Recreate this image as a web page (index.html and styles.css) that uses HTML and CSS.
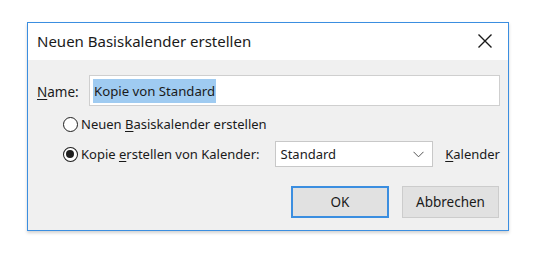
FILE: index.html
```html
<!DOCTYPE html>
<html lang="de">
<head>
<meta charset="utf-8">
<link rel="stylesheet" href="styles.css">
</head>
<body>
<div class="dialog">
  <div class="titlebar">
    <span class="title">Neuen Basiskalender erstellen</span>
    <svg class="close" width="16" height="16" viewBox="0 0 16 16"><path d="M1.5 1.5 L14.5 14.5 M14.5 1.5 L1.5 14.5" stroke="#1a1a1a" stroke-width="1.4" fill="none"/></svg>
  </div>
  <div class="body">
    <div class="name-row">
      <span class="label"><u>N</u>ame:</span>
      <div class="input"><span class="sel">Kopie von Standard</span></div>
    </div>
    <div class="radio-row">
      <span class="radio"></span>
      <span>Neuen <u>B</u>asiskalender erstellen</span>
    </div>
    <div class="radio-row copy-row">
      <span class="radio checked"></span>
      <span class="copy-label">Kopie <u>e</u>rstellen von Kalender:</span>
      <div class="select">
        <span>Standard</span>
        <svg class="chev" width="11" height="7" viewBox="0 0 11 7"><path d="M0.5 0.8 L5.5 5.8 L10.5 0.8" stroke="#555" stroke-width="1" fill="none"/></svg>
      </div>
      <span class="kal"><u>K</u>alender</span>
    </div>
    <div class="buttons">
      <div class="btn ok">OK</div>
      <div class="btn">Abbrechen</div>
    </div>
  </div>
</div>
</body>
</html>
```
FILE: styles.css
```css
html, body {
  margin: 0;
  padding: 0;
  background: #ffffff;
}
body {
  width: 538px;
  height: 259px;
  overflow: hidden;
  font-family: "Noto Sans", "Open Sans", sans-serif;
  color: #1a1a1a;
}
u {
  text-decoration-thickness: 1px;
  text-underline-offset: 2px;
}
.dialog {
  margin: 22px 0 0 27px;
  width: 480px;
  height: 207px;
  border: 1px solid #3b8ee0;
  display: flex;
  flex-direction: column;
  box-shadow: 0 2px 3px rgba(0,0,0,0.18);
}
.titlebar {
  height: 37px;
  background: #ffffff;
  display: flex;
  align-items: center;
  justify-content: space-between;
  padding: 0 15px 0 9px;
}
.title {
  font-size: 15px;
  margin-top: -2px;
}
.close {
  margin-top: -2px;
}
.body {
  flex: 1;
  background: #f0f0f0;
  padding: 15px 8px 0 8px;
  font-size: 13px;
}
.name-row {
  display: flex;
  align-items: center;
  height: 31px;
}
.label {
  width: 52px;
  padding-left: 1px;
  margin-top: 2px;
  font-size: 13.5px;
}
.input {
  flex: 1;
  height: 29px;
  border: 1px solid #cfcfcf;
  background: #ffffff;
  display: flex;
  align-items: center;
  padding-left: 3px;
}
.sel {
  background: #9fcbf1;
  padding: 3px 1px 3px 1px;
  font-size: 13.2px;
}
.radio-row {
  display: flex;
  align-items: center;
  padding-left: 27px;
  margin-top: 7px;
  height: 22px;
}
.copy-row {
  margin-top: 6px;
  height: 26px;
}
.radio {
  width: 13px;
  height: 13px;
  border: 1.5px solid #1f1f1f;
  border-radius: 50%;
  background: #ffffff;
  margin-right: 3px;
  box-sizing: content-box;
  display: flex;
  align-items: center;
  justify-content: center;
}
.radio.checked::after {
  content: "";
  width: 8px;
  height: 8px;
  border-radius: 50%;
  background: #1f1f1f;
}
.copy-label {
  width: 194px;
}
.select {
  border: 1px solid #c8c8c8;
  background: #ffffff;
  display: flex;
  align-items: center;
  justify-content: space-between;
  padding: 0 8px 0 5px;
  box-sizing: border-box;
  width: 159px;
  height: 26px;
}
.kal {
  margin-left: 12px;
}
.buttons {
  display: flex;
  justify-content: flex-end;
  gap: 13px;
  margin-top: 19px;
  padding-right: 1px;
}
.btn {
  width: 97px;
  height: 32px;
  box-sizing: border-box;
  border: 1px solid #cccccc;
  background: #e1e1e1;
  display: flex;
  align-items: center;
  justify-content: center;
  font-size: 13.5px;
}
.btn.ok {
  border: 2px solid #3b8ee0;
  width: 98px;
}
```
